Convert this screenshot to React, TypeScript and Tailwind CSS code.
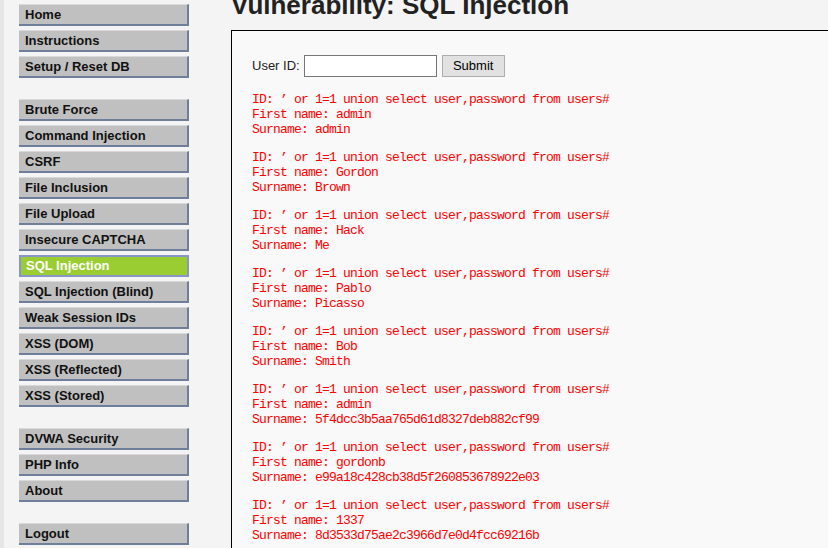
const menuGroups: string[][] = [
  ['Home', 'Instructions', 'Setup / Reset DB'],
  [
    'Brute Force',
    'Command Injection',
    'CSRF',
    'File Inclusion',
    'File Upload',
    'Insecure CAPTCHA',
    'SQL Injection',
    'SQL Injection (Blind)',
    'Weak Session IDs',
    'XSS (DOM)',
    'XSS (Reflected)',
    'XSS (Stored)',
  ],
  ['DVWA Security', 'PHP Info', 'About'],
  ['Logout'],
];

const results = [
  { first: 'admin', surname: 'admin' },
  { first: 'Gordon', surname: 'Brown' },
  { first: 'Hack', surname: 'Me' },
  { first: 'Pablo', surname: 'Picasso' },
  { first: 'Bob', surname: 'Smith' },
  { first: 'admin', surname: '5f4dcc3b5aa765d61d8327deb882cf99' },
  { first: 'gordonb', surname: 'e99a18c428cb38d5f260853678922e03' },
  { first: '1337', surname: '8d3533d75ae2c3966d7e0d4fcc69216b' },
];

const query = "’ or 1=1 union select user,password from users#";

function App() {
  const active = 'SQL Injection';

  return (
    <div className="h-[548px] overflow-hidden bg-[#e7e7e7] pl-[4px] font-['Liberation_Sans',Arial,sans-serif]">
      <div className="flex h-full bg-[#f4f4f4]">
        {/* menu */}
        <div className="w-[227px] shrink-0 pl-[15px] pt-[4px] flex flex-col gap-[21px]">
          {menuGroups.map((group, i) => (
            <ul className="flex flex-col gap-[4px]" key={i}>
              {group.map(item => (
                <li key={item}>
                  {item === active ? (
                    <a className="flex items-center h-[22px] w-[170px] pl-[5px] text-[13px] font-bold text-white bg-[#9acd32] border-2 border-[#8796c6]">
                      {item}
                    </a>
                  ) : (
                    <a className="flex items-center h-[22px] w-[170px] pl-[6px] text-[13px] font-bold text-[#111] bg-[#c0c0c0] border-t border-t-[#d9d9d9] border-r-2 border-b-2 border-r-[#6f7f9b] border-b-[#6f7f9b]">
                      {item}
                    </a>
                  )}
                </li>
              ))}
            </ul>
          ))}
        </div>

        {/* body */}
        <div className="flex-1 min-w-0">
          <h1 className="mt-[-10px] h-[30px] leading-[30px] text-[26px] font-bold text-[#222] whitespace-nowrap">
            Vulnerability: SQL Injection
          </h1>
          <div className="mt-[10px] w-[640px] border border-black bg-[#f8f9f8] pl-[20px] pt-[24px] pb-[20px]">
            <form className="flex items-center h-[22px] text-[13px] text-[#222]" onSubmit={e => e.preventDefault()}>
              <span>User ID:</span>
              <input type="text" className="ml-[4px] h-[22px] w-[133px] border border-[#767676] bg-white" />
              <button type="submit" className="ml-[5px] h-[22px] w-[63px] border border-[#adadad] bg-[#e1e1e1] text-[13px] text-black">
                Submit
              </button>
            </form>
            <div className="mt-[15px] flex flex-col gap-[13px]">
              {results.map((r, i) => (
                <pre className="font-['Liberation_Mono',monospace] text-[13px] leading-[15px] tracking-[-0.8px] text-[#ff0000]" key={i}>
                  {`ID: ${query}\nFirst name: ${r.first}\nSurname: ${r.surname}`}
                </pre>
              ))}
            </div>
          </div>
        </div>
      </div>
    </div>
  );
}

export default App;
